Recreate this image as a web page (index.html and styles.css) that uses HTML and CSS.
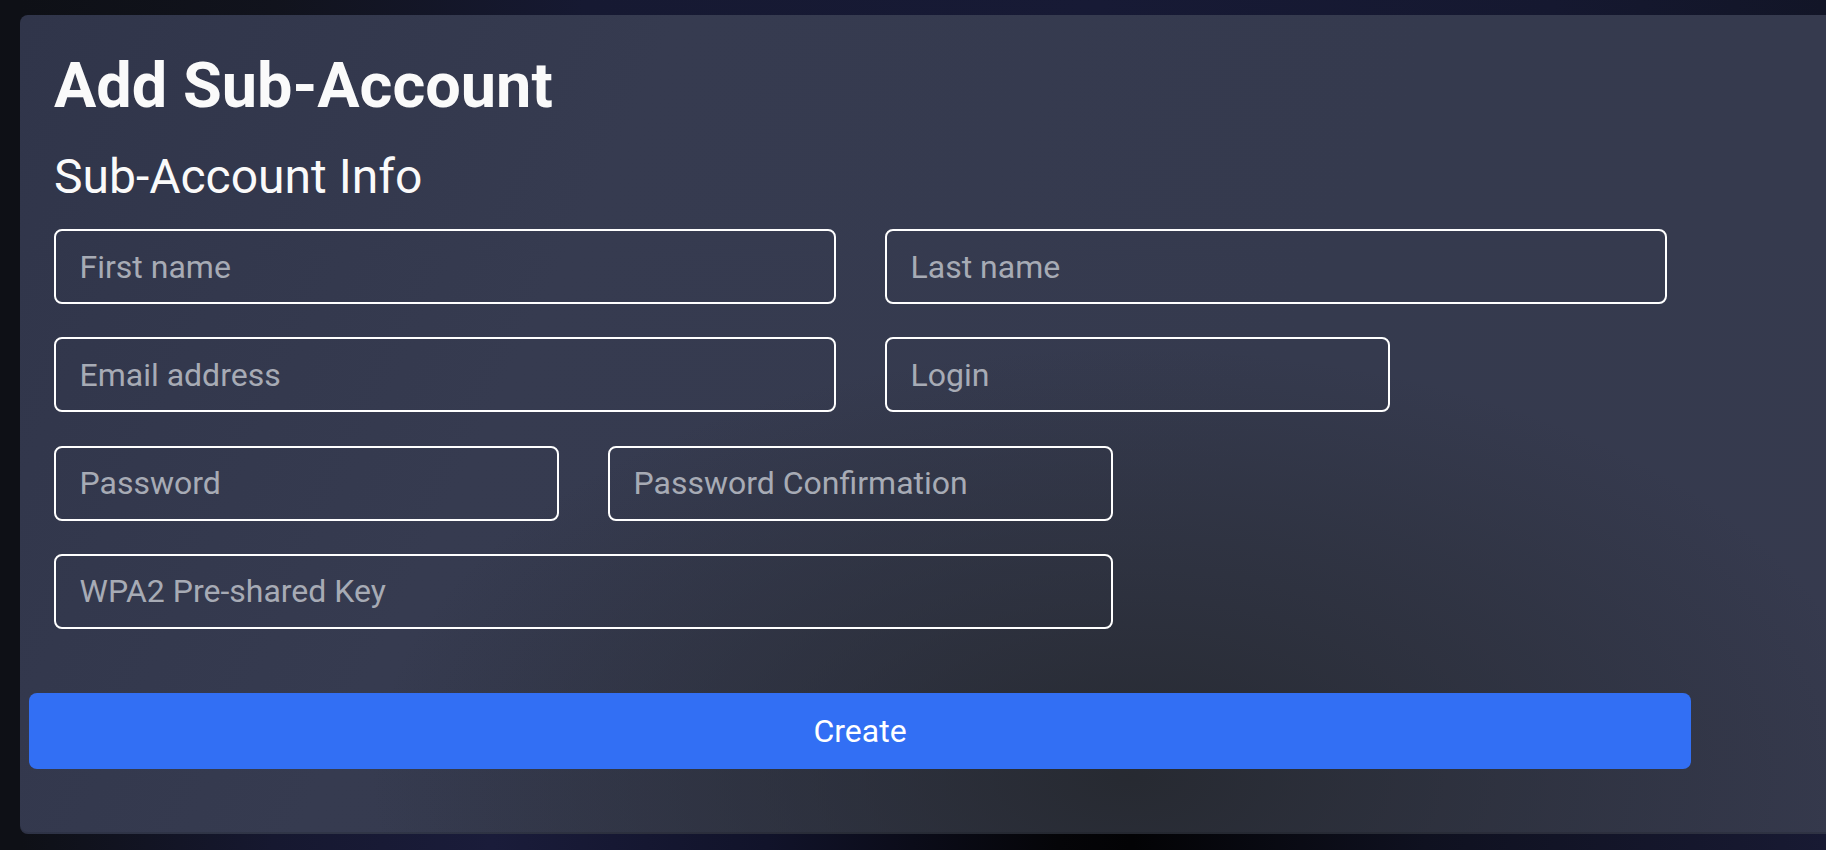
FILE: index.html
```html
<!DOCTYPE html>
<html lang="en">
<head>
    <meta charset="UTF-8">
    <meta name="viewport" content="width=device-width, initial-scale=1.0">
    <title>Add Sub-Account</title>
    <link rel="stylesheet" href="styles.css">
</head>
<body>
    <div class="page">
        <div class="card">
            <form class="form" onsubmit="return false">
                <h1>Add Sub-Account</h1>
                <h2>Sub-Account Info</h2>

                <div class="fields">
                    <input class="field span-3" type="text" placeholder="First name">
                    <input class="field span-3" type="text" placeholder="Last name">

                    <input class="field span-3" type="email" placeholder="Email address">
                    <input class="field span-2" type="text" placeholder="Login">

                    <input class="field span-2" type="password" placeholder="Password">
                    <input class="field span-2" type="password" placeholder="Password Confirmation">

                    <input class="field span-4" type="text" placeholder="WPA2 Pre-shared Key">
                </div>

                <button class="btn-create" type="submit">Create</button>
            </form>
        </div>
    </div>
</body>
</html>
```

FILE: styles.css
```css
html, body {
    margin: 0;
    padding: 0;
    height: 100%;
    overflow: hidden;
}

body {
    font-family: Roboto, "Liberation Sans", Arial, sans-serif;
    background:
        linear-gradient(90deg, #0e1016 0, #0e1016 20px, #11131d 15%, #161932 32%, #171a35 60%, #151830 85%, #121527 100%) top / 100% 60% no-repeat,
        linear-gradient(90deg, #0e1016 0, #0e1016 20px, #161830 15%, #1a1c3a 27%, #11132a 42%, #050508 58%, #030305 62%, #0f1120 78%, #181a33 100%) bottom / 100% 40% no-repeat;
    background-color: #0e1016;
    color: #fafafa;
}

.page {
    padding: 15px 0 0 20px;
}

.card {
    height: 819px;
    margin-right: -12px;
    padding: 33px 0 0 9px;
    box-sizing: border-box;
    border-radius: 8px;
    background:
        radial-gradient(ellipse 760px 430px at 61% 93%, rgba(38, 41, 48, 0.95) 0%, rgba(38, 41, 48, 0.5) 45%, rgba(38, 41, 48, 0) 100%),
        linear-gradient(115deg, #30354a 0%, #363b50 30%, #353a4e 65%, #363a4e 100%);
    box-shadow: inset 0 -2px 0 rgba(0, 0, 0, 0.1);
}

.form {
    width: 1662px;
}

h1 {
    margin: 0 0 26px 25px;
    font-size: 63px;
    line-height: 75px;
    font-weight: 700;
}

h2 {
    margin: 0 0 24px 25px;
    font-size: 48px;
    line-height: 56px;
    font-weight: 400;
}

.fields {
    display: grid;
    grid-template-columns: repeat(6, 1fr);
    column-gap: 49px;
    row-gap: 33.3px;
    padding: 0 24.5px;
}

.span-2 { grid-column: span 2; }
.span-3 { grid-column: span 3; }
.span-4 { grid-column: span 4; }

.field {
    height: 75px;
    width: 100%;
    box-sizing: border-box;
    padding: 0 24px;
    border: 2px solid #ffffff;
    border-radius: 8px;
    background: transparent;
    color: #ffffff;
    font-family: inherit;
    font-size: 32px;
    outline: none;
}

.field::placeholder {
    color: #a7abb5;
    opacity: 1;
}

.btn-create {
    display: block;
    width: 100%;
    height: 76px;
    margin-top: 64px;
    border: 0;
    border-radius: 8px;
    background-color: #326ff4;
    color: #ffffff;
    font-family: inherit;
    font-size: 32px;
    font-weight: 400;
    cursor: pointer;
}
```
